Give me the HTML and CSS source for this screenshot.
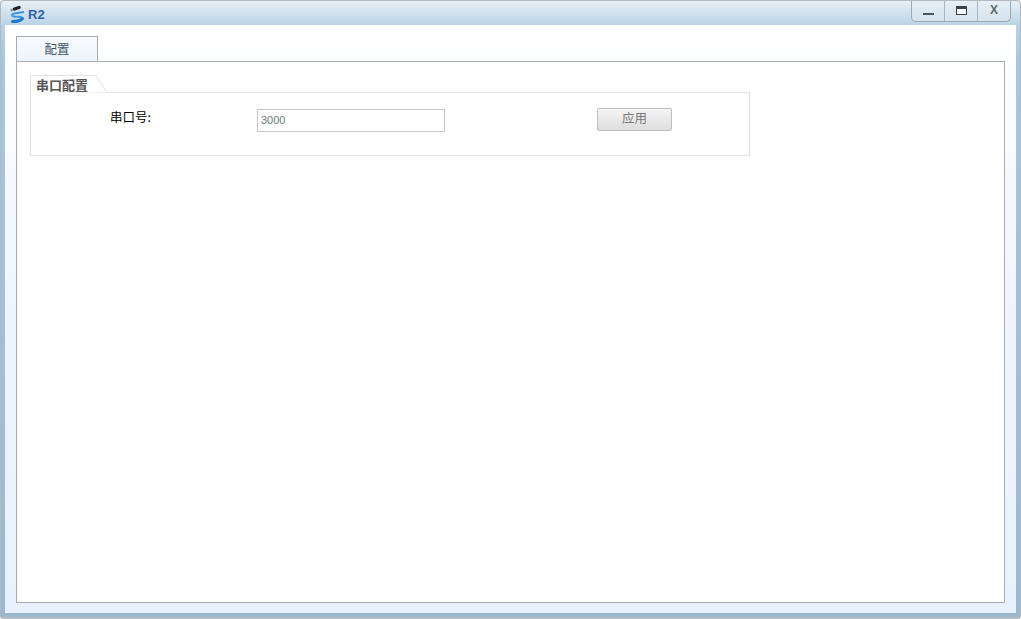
FILE: index.html
```html
<!DOCTYPE html>
<html lang="zh">
<head>
<meta charset="utf-8">
<title>R2</title>
<link rel="stylesheet" href="styles.css">
</head>
<body>
<div class="window">
  <header class="titlebar">
    <div class="title">
      <svg class="logo" width="18" height="20" viewBox="0 0 18 20">
        <path d="M6.5 4 L11 2.5" stroke="#222" stroke-width="3.4" stroke-linecap="round" fill="none"/>
        <path d="M5 4.5 L2.5 5.5" stroke="#8c8c8c" stroke-width="2.4" fill="none"/>
        <path d="M16 7 L6 8.5 C3.5 9 3.5 11 6 11.5 L14 12" stroke="#3a98e0" stroke-width="2.2" fill="none"/>
        <path d="M14.5 13.5 C13 15.5 9 16.5 4.5 16.5" stroke="#1f78c8" stroke-width="3" stroke-linecap="round" fill="none"/>
      </svg>
      <span class="title-text">R2</span>
    </div>
    <div class="controls">
      <button class="ctl" aria-label="最小化"><span class="ico-min"></span></button>
      <button class="ctl" aria-label="最大化"><span class="ico-max"></span></button>
      <button class="ctl ctl-x">X</button>
    </div>
  </header>
  <main class="client">
    <nav class="tabs"><div class="tab">配置</div></nav>
    <section class="panel">
      <div class="group">
        <div class="legend">
          <svg class="legend-shape" width="78" height="18" viewBox="0 0 78 18">
            <path d="M0.5 18 V0.5 H66 L77 17.5" stroke="#e2e2e2" fill="#fff"/>
          </svg>
          <span class="legend-text">串口配置</span>
        </div>
        <div class="box">
          <div class="row">
            <label class="label" for="port">串口号:</label>
            <input class="input" id="port" value="3000">
            <button class="apply">应用</button>
          </div>
        </div>
      </div>
    </section>
  </main>
</div>
</body>
</html>
```
FILE: styles.css
```css
* { box-sizing: border-box; }
html, body { margin: 0; height: 100%; background: #fff; overflow: hidden; }
body { font-family: "Noto Sans CJK SC", "Liberation Sans", sans-serif; }

.window {
  width: 1021px;
  height: 619px;
  display: flex;
  flex-direction: column;
  border: 1px solid #b4b8bc;
  border-bottom-width: 2px;
  border-bottom-color: #b9bcbf;
  border-radius: 4px 4px 3px 3px;
  background: linear-gradient(#e8f0f6 0, #b9d3e6 24px, #a8c6dc 60px, #9ab9d1 100%);
  padding: 0 4px 4px;
  overflow: hidden;
}

.titlebar {
  height: 24px;
  flex: none;
  display: flex;
  justify-content: space-between;
  align-items: flex-start;
}
.title { display: flex; align-items: center; height: 24px; padding-left: 3px; gap: 2px; }
.logo { display: block; margin-top: 3px; }
.title-text {
  font: bold 13px "Liberation Sans", sans-serif;
  color: #2b62a8;
  margin-top: 2px;
}

.controls {
  display: flex;
  height: 21px;
  margin-right: 5px;
  border: 1px solid #9aa6b0;
  border-top: 0;
  border-radius: 0 0 5px 5px;
  background: linear-gradient(#e6eff6, #d4e3ee);
  overflow: hidden;
}
.ctl {
  width: 33px;
  padding: 0;
  border: 0;
  border-left: 1px solid #a9b5bf;
  background: none;
  display: flex;
  align-items: center;
  justify-content: center;
  font: bold 12px "Liberation Sans", sans-serif;
  color: #666;
}
.ctl:first-child { border-left: 0; width: 32px; }
.ico-min { width: 11px; height: 2px; background: #4a5560; margin-top: 6px; }
.ico-max { width: 11px; height: 9px; border: 1px solid #38424c; border-top-width: 3px; background: #fff; margin-top: -2px; }
.ctl-x { padding-bottom: 3px; }

.client {
  flex: 1;
  display: flex;
  flex-direction: column;
  padding: 11px 11px 10px 11px;
  background: linear-gradient(#fff 0, #f3f7fe 200px, #e8f1fd 100%);
  min-height: 0;
}

.tabs { display: flex; flex: none; height: 25px; position: relative; z-index: 1; }
.tab {
  width: 82px;
  height: 26px;
  border: 1px solid #a8acb0;
  background: linear-gradient(#f8fbfe, #eef4fb);
  color: #3f5468;
  font-size: 12.5px;
  text-align: center;
  line-height: 24px;
}

.panel {
  flex: 1;
  background: #fff;
  border: 1px solid #a8acb0;
  padding: 13px 13px 0;
}

.group { width: 720px; }
.legend { position: relative; height: 17px; }
.legend-shape { position: absolute; left: 0; top: 0; display: block; }
.legend-text {
  position: relative;
  display: block;
  padding-left: 6px;
  font-size: 13px;
  font-weight: 700;
  line-height: 19px;
  color: #555;
}
.box {
  height: 64px;
  border: 1px solid #e2e2e2;
}
.row {
  display: grid;
  grid-template-columns: 147px 188px 152px 75px;
  padding: 15px 0 0 79px;
  align-items: start;
}
.label { font-size: 12.5px; color: #000; line-height: 18px; }
.input {
  width: 188px;
  height: 23px;
  margin-top: 1px;
  padding: 0 3px 2px;
  border: 1px solid #c6c6c6;
  outline: none;
  background: #fff;
  font: 11px "Liberation Sans", sans-serif;
  color: #6b7b78;
}
.apply {
  grid-column: 4;
  width: 75px;
  height: 23px;
  padding: 0 0 5px;
  border: 1px solid #bdbdbd;
  border-radius: 2px;
  background: linear-gradient(#f4f4f4, #dedede);
  color: #777;
  font: 12.5px/15px "Noto Sans CJK SC", sans-serif;
}
```
